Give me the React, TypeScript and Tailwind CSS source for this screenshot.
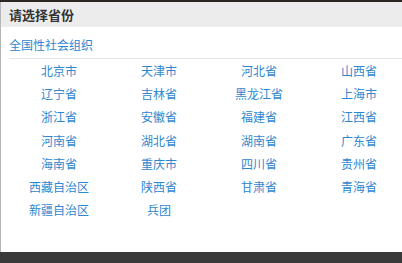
import React from 'react';

const provinces = [
  '北京市', '天津市', '河北省', '山西省',
  '辽宁省', '吉林省', '黑龙江省', '上海市',
  '浙江省', '安徽省', '福建省', '江西省',
  '河南省', '湖北省', '湖南省', '广东省',
  '海南省', '重庆市', '四川省', '贵州省',
  '西藏自治区', '陕西省', '甘肃省', '青海省',
  '新疆自治区', '兵团',
];

export default function App() {
  return (
    <div
      className="h-[263px] w-[402px] overflow-hidden bg-gradient-to-b from-[#2b2624] to-[#3a3a3a] pt-[2px]"
      style={{ fontFamily: '"Noto Sans CJK SC", "Noto Sans", sans-serif' }}
    >
      <div className="w-[412px] border-l border-[#b5b5b5] bg-white">
        {/* header */}
        <div className="flex h-[25px] items-center bg-[#ececec] px-2 text-[13px] font-bold text-[#333]">
          请选择省份
        </div>
        {/* body */}
        <div className="pb-[30px]">
          <div className="flex h-[31px] items-end px-2 pb-[4px] text-[12px] text-[#2f87d0]">
            全国性社会组织
          </div>
          <div className="ml-2 border-t border-[#e6e6e6]">
            <div className="grid w-[400px] grid-cols-4">
              {provinces.map(p => (
                <div key={p} className="flex h-[23.3px] items-center justify-center text-[12px] text-[#2f87d0]">
                  {p}
                </div>
              ))}
            </div>
          </div>
        </div>
      </div>
    </div>
  );
}
